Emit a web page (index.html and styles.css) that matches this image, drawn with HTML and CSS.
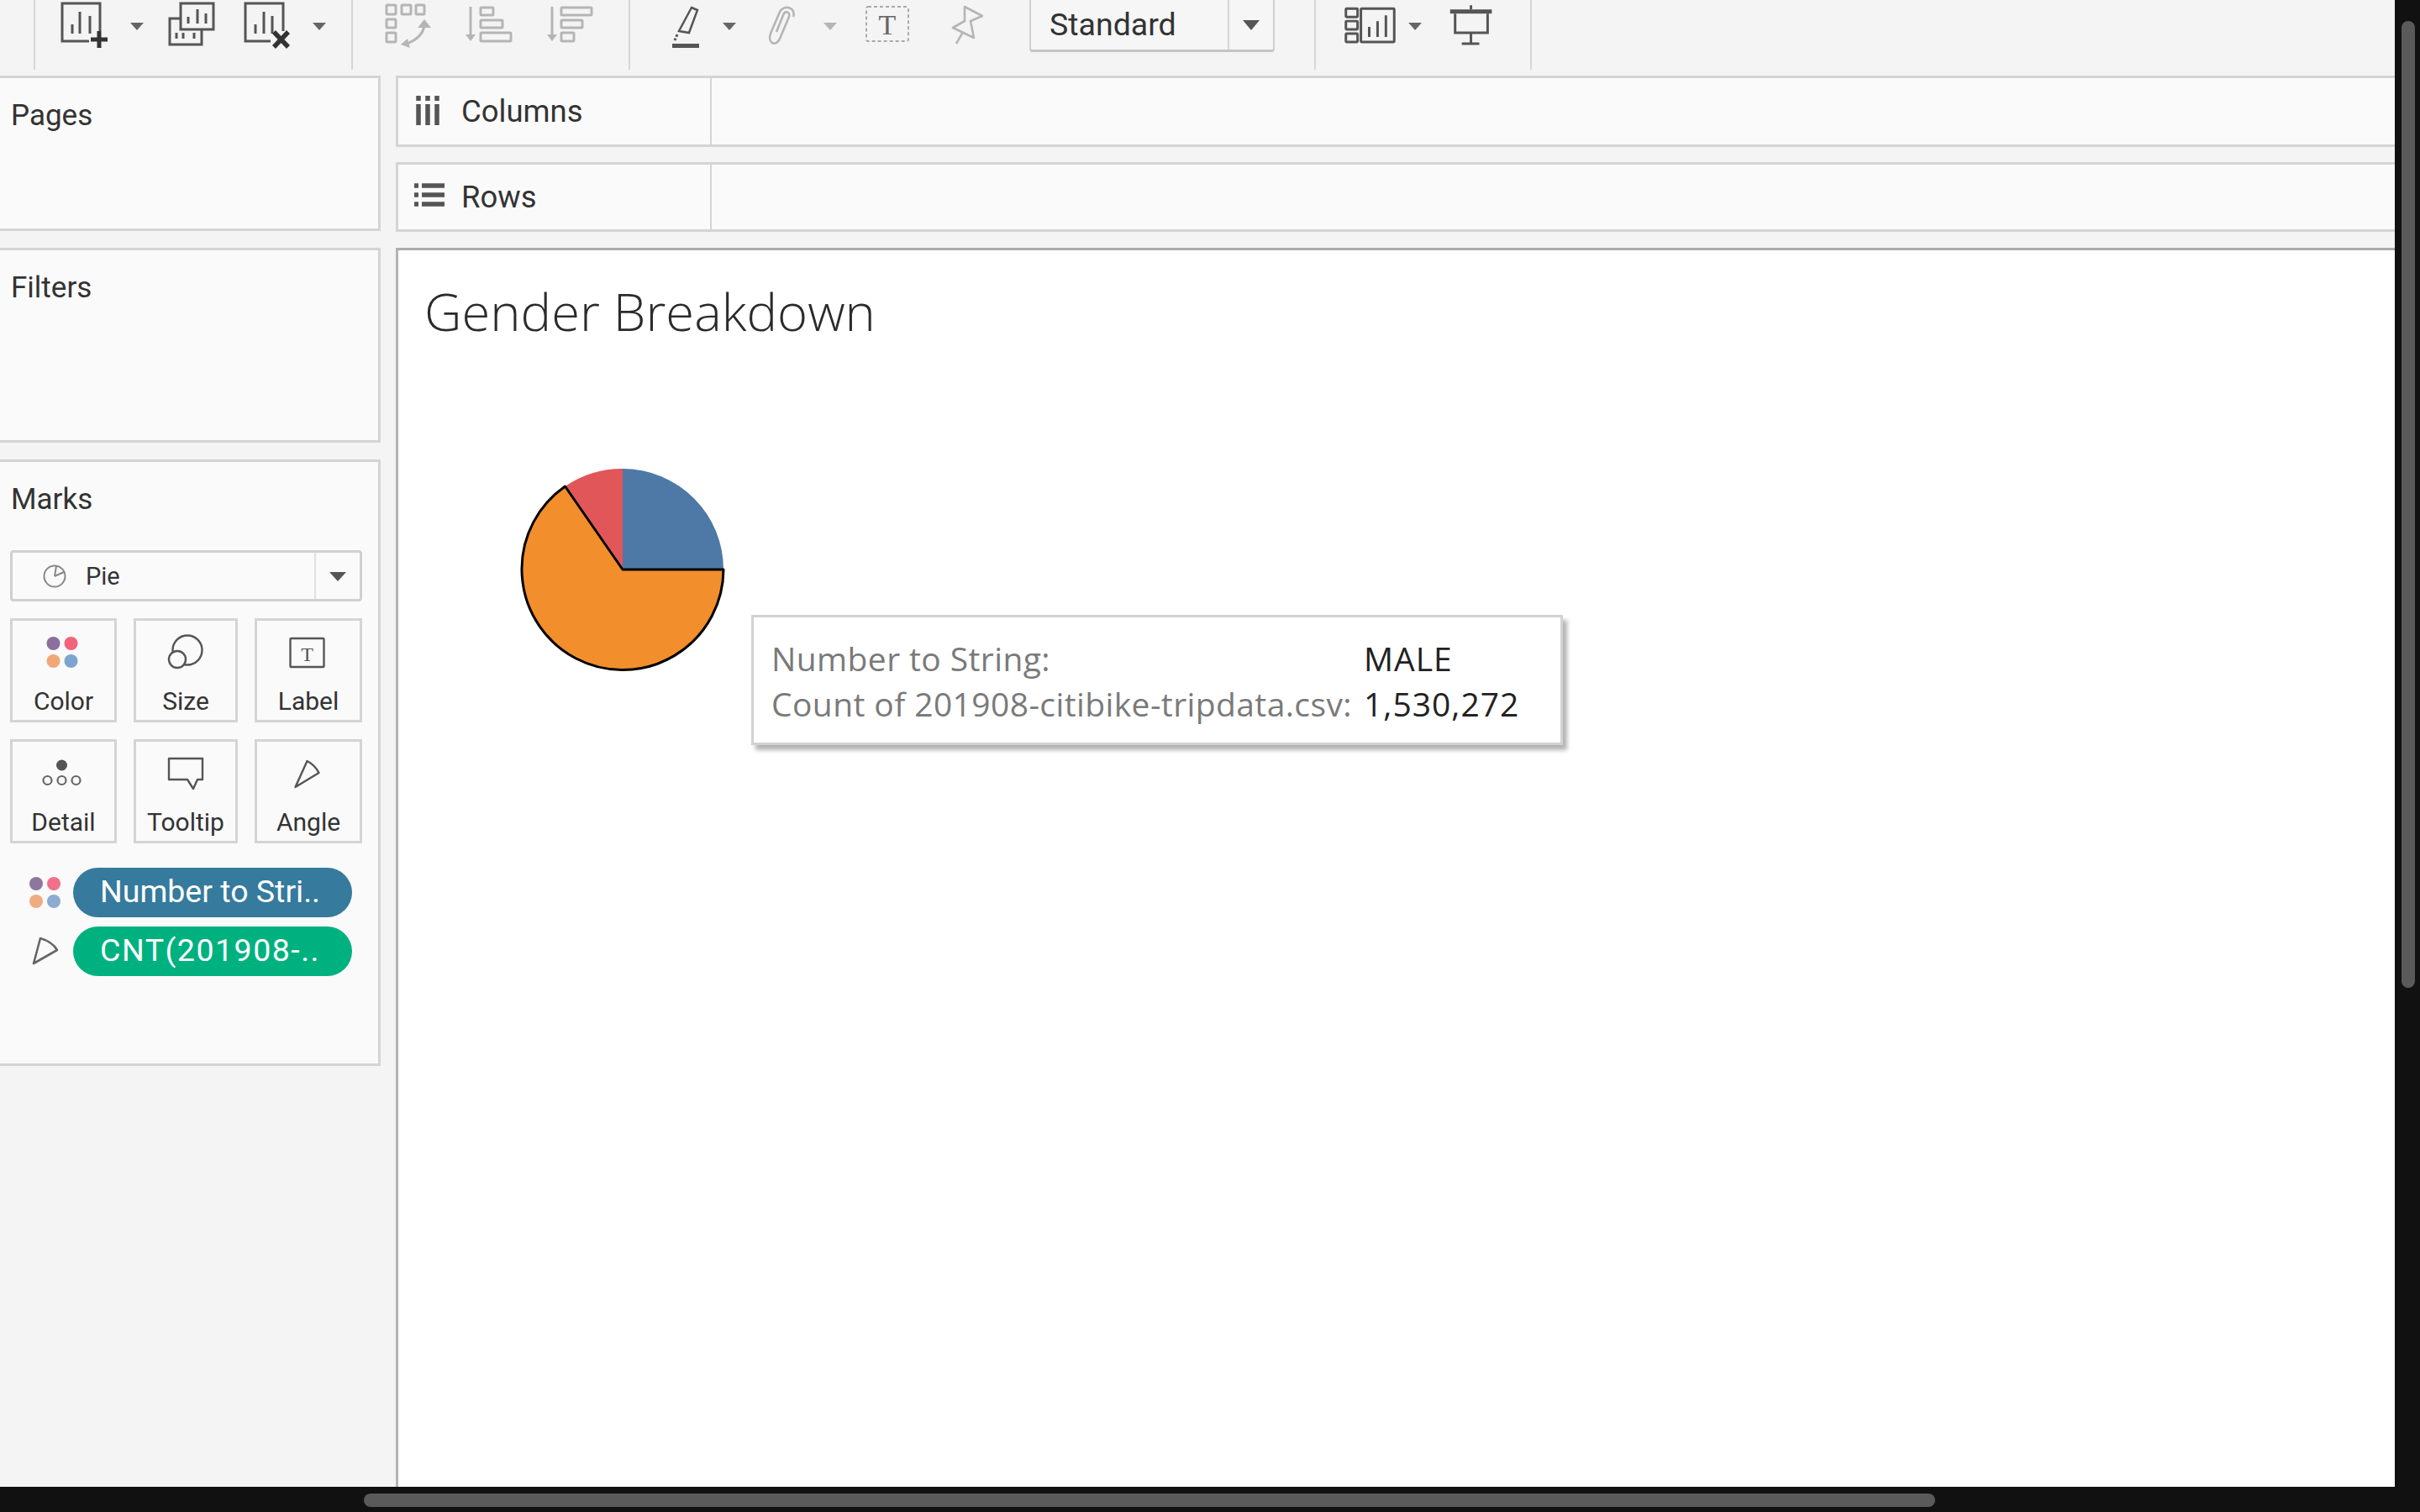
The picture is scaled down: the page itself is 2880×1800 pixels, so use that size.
FILE: index.html
```html
<!DOCTYPE html>
<html lang="en">
<head>
    <meta charset="UTF-8">
    <title>Gender Breakdown</title>
    <link rel="stylesheet" href="styles.css">
</head>
<body>

<div class="window">
    <div class="app">

        <div class="toolbar">
            <div class="tool-group group-a">
                <svg class="tools" width="376" height="83" viewBox="42 0 376 83">
                    <g fill="none" stroke="#555" stroke-width="3">
                        <path d="M119 37V4H74V49H106"/>
                        <path d="M86 29V40M95 14V40M107 19V40"/>
                        <rect x="215" y="4" width="39" height="31" fill="#f4f4f4"/>
                        <path d="M224 20V28M235 11V28M245 16V28"/>
                        <path d="M215 22H202V53H240V35"/>
                        <path d="M210 39V46M218 39V46M231 39V46"/>
                        <path d="M337 37V4H292V49H322"/>
                        <path d="M304 29V40M314 14V40M324 19V40"/>
                    </g>
                    <path d="M108 47H128M118 37V57" fill="none" stroke="#333" stroke-width="5"/>
                    <path d="M326 38L343 56M343 38L326 56" fill="none" stroke="#333" stroke-width="5.5"/>
                    <polygon points="155,27 171,27 163,36" fill="#666"/>
                    <polygon points="372,27 388,27 380,36" fill="#666"/>
                </svg>
            </div>
            <div class="tool-group group-b">
                <svg class="tools" width="328" height="83" viewBox="420 0 328 83">
                    <g fill="none" stroke="#b5b5b5" stroke-width="3">
                        <rect x="460" y="6" width="11" height="11" rx="1"/>
                        <rect x="478" y="6" width="11" height="11" rx="1"/>
                        <rect x="495" y="6" width="10" height="11" rx="1"/>
                        <rect x="460" y="23" width="11" height="10" rx="1"/>
                        <rect x="460" y="39" width="11" height="11" rx="1"/>
                        <path d="M505 30Q503 45 484 52"/>
                        <path d="M560 8V44M657 8V44"/>
                        <rect x="572" y="9" width="15" height="9" rx="1"/>
                        <rect x="572" y="24" width="26" height="9" rx="1"/>
                        <rect x="572" y="39" width="36" height="10" rx="1"/>
                        <rect x="668" y="9" width="36" height="9" rx="1"/>
                        <rect x="668" y="24" width="25" height="9" rx="1"/>
                        <rect x="668" y="39" width="15" height="10" rx="1"/>
                    </g>
                    <g fill="#b5b5b5">
                        <polygon points="497,33 513,33 505,23"/>
                        <polygon points="485,46 488,57 477,53"/>
                        <polygon points="554,41 566,41 560,49"/>
                        <polygon points="651,41 663,41 657,49"/>
                    </g>
                </svg>
            </div>
            <div class="tool-group group-c">
                <svg class="tools" width="475" height="83" viewBox="750 0 475 83">
                    <path d="M823 9L830 12L820 39L808 37Z" fill="none" stroke="#555" stroke-width="2.5"/>
                    <path d="M806 41L803 48" fill="none" stroke="#555" stroke-width="3" stroke-dasharray="3 2"/>
                    <rect x="800" y="52" width="32" height="5" fill="#555"/>
                    <polygon points="860,27 876,27 868,36" fill="#666"/>
                    <path d="M944 20C948 10 934 4 928 14L917 40C913 52 924 56 928 46L939 20C941 14 934 12 932 18L924 38" fill="none" stroke="#b5b5b5" stroke-width="2.6"/>
                    <polygon points="980,27 996,27 988,36" fill="#b5b5b5"/>
                    <rect x="1031" y="8" width="50" height="41" rx="2" fill="none" stroke="#aaa" stroke-width="2" stroke-dasharray="4 3"/>
                    <text class="serif-t" x="1056" y="41" font-size="34" fill="#666">T</text>
                    <path d="M1148 8L1169 19L1155 25L1159 45L1134 33L1148 25ZM1146 38L1138 52" fill="none" stroke="#b5b5b5" stroke-width="2.6" stroke-linejoin="round"/>
                </svg>
                <div class="select">
                    <span class="select-value">Standard</span>
                    <span class="select-arrow"></span>
                </div>
            </div>
            <div class="tool-group group-d">
                <svg class="tools" width="257" height="83" viewBox="1566 0 257 83">
                    <g fill="none" stroke="#555" stroke-width="3">
                        <rect x="1602" y="10" width="14" height="10" rx="1"/>
                        <rect x="1602" y="25" width="14" height="10" rx="1"/>
                        <rect x="1602" y="40" width="14" height="10" rx="1"/>
                        <rect x="1620" y="10" width="40" height="40" rx="1"/>
                        <path d="M1630 32V44M1640 25V44M1650 18V44"/>
                        <path d="M1733 16V39H1772V16M1752 39V52M1741 52H1762M1752 6V11"/>
                    </g>
                    <polygon points="1677,27 1693,27 1685,36" fill="#666"/>
                    <rect x="1727" y="11" width="50" height="5" fill="#555"/>
                </svg>
            </div>
        </div>

        <div class="workspace">
            <div class="sidebar">
                <section class="panel panel-pages"><h2>Pages</h2></section>
                <section class="panel panel-filters"><h2>Filters</h2></section>
                <section class="panel panel-marks">
                    <h2>Marks</h2>
                    <div class="mark-type">
                        <svg class="mark-type-icon" width="30" height="30" viewBox="0 0 30 30">
                            <circle cx="15" cy="15" r="12.5" fill="none" stroke="#888" stroke-width="2"/>
                            <path d="M15 15L17 3M15 15L26 10" fill="none" stroke="#888" stroke-width="2"/>
                        </svg>
                        <span class="mark-type-name">Pie</span>
                        <span class="mark-type-arrow"></span>
                    </div>
                    <div class="mark-cards">
                        <div class="mark-card">
                            <svg width="60" height="60" viewBox="0 0 60 60">
                                <circle cx="17.5" cy="20" r="8" fill="#8b6f9e"/>
                                <circle cx="38.5" cy="20" r="8" fill="#f1647a"/>
                                <circle cx="17.5" cy="41" r="8" fill="#f0a878"/>
                                <circle cx="38.5" cy="41" r="8" fill="#7ba5d0"/>
                            </svg>
                            <span>Color</span>
                        </div>
                        <div class="mark-card">
                            <svg width="60" height="60" viewBox="0 0 60 60">
                                <circle cx="32" cy="28" r="17.5" fill="none" stroke="#555" stroke-width="2.4"/>
                                <circle cx="20" cy="39" r="10" fill="#fafafa" stroke="#555" stroke-width="2.4"/>
                            </svg>
                            <span>Size</span>
                        </div>
                        <div class="mark-card">
                            <svg width="60" height="60" viewBox="0 0 60 60">
                                <rect x="8.5" y="14" width="40" height="34" rx="1" fill="none" stroke="#555" stroke-width="2.4"/>
                                <text class="serif-t" x="28.5" y="41" font-size="24" fill="#555">T</text>
                            </svg>
                            <span>Label</span>
                        </div>
                        <div class="mark-card">
                            <svg width="60" height="60" viewBox="0 0 60 60">
                                <circle cx="27.5" cy="21" r="6.5" fill="#555"/>
                                <g fill="none" stroke="#666" stroke-width="2.2">
                                    <circle cx="10.5" cy="39" r="5"/>
                                    <circle cx="27.5" cy="39" r="5"/>
                                    <circle cx="44.5" cy="39" r="5"/>
                                </g>
                            </svg>
                            <span>Detail</span>
                        </div>
                        <div class="mark-card">
                            <svg width="60" height="60" viewBox="0 0 60 60">
                                <path d="M10 13H50V38H44L39 49L32 38H10Z" fill="none" stroke="#555" stroke-width="2.4" stroke-linejoin="round"/>
                            </svg>
                            <span>Tooltip</span>
                        </div>
                        <div class="mark-card">
                            <svg width="60" height="60" viewBox="0 0 60 60">
                                <path d="M28.5 16Q38 21 42.5 30L14.5 47Z" fill="none" stroke="#555" stroke-width="2.4" stroke-linejoin="round"/>
                            </svg>
                            <span>Angle</span>
                        </div>
                    </div>
                    <div class="pills">
                        <div class="pill-row">
                            <svg class="pill-icon" width="75" height="59" viewBox="12 1032 75 59">
                                <circle cx="43" cy="1051" r="8" fill="#8b789c"/>
                                <circle cx="64" cy="1051" r="8" fill="#f1708a"/>
                                <circle cx="43" cy="1072" r="8" fill="#f0ab82"/>
                                <circle cx="64" cy="1072" r="8" fill="#8cabd0"/>
                            </svg>
                            <span class="pill pill-blue">Number to Stri..</span>
                        </div>
                        <div class="pill-row">
                            <svg class="pill-icon" width="75" height="59" viewBox="12 1102 75 59">
                                <path d="M48 1116Q62 1120 68 1130L40 1146Z" fill="none" stroke="#666" stroke-width="2.6" stroke-linejoin="round"/>
                            </svg>
                            <span class="pill pill-green">CNT(201908-..</span>
                        </div>
                    </div>
                </section>
            </div>

            <div class="content">
                <div class="shelf">
                    <div class="shelf-label">
                        <svg width="36" height="36" viewBox="0 0 36 36">
                            <path d="M5 0V6M5 10V35M16 0V6M16 10V35M27 0V6M27 10V35" fill="none" stroke="#555" stroke-width="5.5"/>
                        </svg>
                        <span>Columns</span>
                    </div>
                </div>
                <div class="shelf">
                    <div class="shelf-label">
                        <svg width="36" height="36" viewBox="0 0 36 36">
                            <path d="M0 5H5M9 5H36M0 16H5M9 16H36M0 27H5M9 27H36" fill="none" stroke="#555" stroke-width="5.5"/>
                        </svg>
                        <span>Rows</span>
                    </div>
                </div>
                <div class="canvas">
                    <h1>Gender Breakdown</h1>
                    <svg class="pie" width="262" height="262" viewBox="610 548 262 262">
                        <path d="M741 678V558A120 120 0 0 1 861 678Z" fill="#4e78a6"/>
                        <path d="M741 678L672.5 579A120 120 0 0 1 741 558Z" fill="#e15759"/>
                        <path d="M741 678H861A120 120 0 1 1 672.5 579Z" fill="#f28e2b" stroke="#000" stroke-width="3" stroke-linejoin="round"/>
                    </svg>
                    <div class="tip">
                        <span class="tip-key">Number to String:</span>
                        <span class="tip-val">MALE</span>
                        <span class="tip-key">Count of 201908-citibike-tripdata.csv:</span>
                        <span class="tip-val">1,530,272</span>
                    </div>
                </div>
            </div>
        </div>
    </div>

    <div class="track-v"><div class="thumb-v"></div></div>
    <div class="track-h"><div class="thumb-h"></div></div>
</div>

</body>
</html>
```

FILE: styles.css
```css
* {
    box-sizing: border-box;
}

html, body {
    margin: 0;
    height: 100%;
}

body {
    font-family: Roboto, "Liberation Sans", sans-serif;
    color: #333;
    background-color: #111;
    overflow: hidden;
}

svg {
    display: block;
}

.serif-t {
    font-family: "Liberation Serif", serif;
    text-anchor: middle;
}

.window {
    display: grid;
    grid-template-columns: 2850px 30px;
    grid-template-rows: 1770px 30px;
    height: 1800px;
}

.app {
    background-color: #f4f4f4;
    overflow: hidden;
}

/* toolbar */
.toolbar {
    display: flex;
    height: 90px;
    padding-left: 40px;
}

.tool-group {
    display: flex;
    align-items: flex-start;
    height: 83px;
    border-left: 2px solid #d6d6d6;
}

.group-a {
    width: 378px;
}

.group-b {
    width: 330px;
}

.group-c {
    width: 816px;
}

.group-d {
    width: 259px;
    border-right: 2px solid #d6d6d6;
}

.select {
    display: flex;
    width: 292px;
    height: 62px;
    background-color: #f6f6f6;
    border: 2px solid #cfcfcf;
    border-top: none;
    border-bottom: 3px solid #c4c4c4;
    border-radius: 0 0 4px 4px;
}

.select-value {
    width: 236px;
    padding-left: 22px;
    font-size: 37.5px;
    line-height: 58px;
    border-right: 2px solid #d6d6d6;
}

.select-arrow {
    width: 0;
    height: 0;
    margin: 24px 0 0 16px;
    border-left: 10px solid transparent;
    border-right: 10px solid transparent;
    border-top: 12px solid #555;
}

/* left side */
.workspace {
    display: flex;
    gap: 18px;
}

.sidebar {
    display: flex;
    flex-direction: column;
    gap: 20px;
    width: 453px;
}

.panel {
    background-color: #fafafa;
    border: 3px solid #d4d4d4;
    border-left: none;
    padding: 24px 19px 0 12px;
}

.panel h2 {
    margin: 0 0 0 1px;
    font-size: 35px;
    font-weight: 400;
    line-height: 42px;
}

.panel-pages {
    height: 185px;
}

.panel-filters {
    height: 232px;
}

.panel-marks {
    height: 722px;
}

.mark-type {
    display: flex;
    align-items: center;
    height: 61px;
    margin-top: 39px;
    border: 3px solid #d0d0d0;
    border-radius: 4px;
}

.mark-type-icon {
    margin-left: 35px;
}

.mark-type-name {
    margin-left: 22px;
    font-size: 29px;
}

.mark-type-arrow {
    position: relative;
    align-self: stretch;
    width: 54px;
    margin-left: auto;
    border-left: 2px solid #e0e0e0;
}

.mark-type-arrow::after {
    content: "";
    position: absolute;
    left: 16px;
    top: 23px;
    border-left: 10px solid transparent;
    border-right: 10px solid transparent;
    border-top: 11px solid #555;
}

.mark-cards {
    display: grid;
    grid-template-columns: 127px 124px 128px;
    grid-auto-rows: 124px;
    gap: 20px;
    margin-top: 20px;
}

.mark-card {
    display: flex;
    flex-direction: column;
    align-items: center;
    padding-top: 7px;
    font-size: 30px;
    line-height: 40px;
    border: 3px solid #d4d4d4;
}

.mark-card span {
    margin-top: 9px;
}

.pills {
    display: flex;
    flex-direction: column;
    gap: 11px;
    margin-top: 29px;
}

.pill-row {
    display: flex;
}

.pill {
    width: 332px;
    height: 59px;
    padding-left: 32px;
    font-size: 37.5px;
    line-height: 56px;
    color: #fff;
    border-radius: 30px;
}

.pill-blue {
    background-color: #367a9d;
}

.pill-green {
    background-color: #00b180;
    letter-spacing: 1.5px;
}

/* shelves and view */
.content {
    display: flex;
    flex-direction: column;
    flex: 1;
}

.shelf {
    height: 85px;
    margin-bottom: 18px;
    background-color: #fafafa;
    border: 3px solid #d4d4d4;
    border-right: none;
}

.shelf + .shelf {
    height: 83px;
    margin-bottom: 19px;
}

.shelf-label {
    display: flex;
    align-items: center;
    width: 373px;
    height: 100%;
    padding-left: 19px;
    font-size: 36.5px;
    border-right: 2px solid #d4d4d4;
}

.shelf-label svg {
    margin-top: -2px;
}

.shelf-label span {
    margin-left: 20px;
}

.canvas {
    position: relative;
    height: 1476px;
    padding: 32px 0 0 31px;
    background-color: #fff;
    border-top: 3px solid #ababab;
    border-left: 3px solid #b3b3b3;
}

.canvas h1 {
    margin: 0;
    font-family: "Open Sans", sans-serif;
    font-size: 61.5px;
    font-weight: 300;
    line-height: 80px;
    color: #2b2b2b;
}

.pie {
    margin: 138px 0 0 105px;
}

.tip {
    position: absolute;
    left: 420px;
    top: 434px;
    display: grid;
    grid-template-columns: 705px auto;
    grid-auto-rows: 54px;
    align-content: center;
    width: 966px;
    height: 155px;
    padding: 2px 0 0 21px;
    font-family: "Open Sans", sans-serif;
    font-size: 39px;
    letter-spacing: 0.4px;
    line-height: 54px;
    background-color: #fff;
    border: 3px solid #d2d2d2;
    box-shadow: 5px 6px 5px #b4b4b4;
}

.tip-key {
    color: #7a7a7a;
}

.tip-val {
    color: #222;
    letter-spacing: 1px;
}

/* scrollbars */
.track-v {
    padding: 25px 0 0 8px;
}

.thumb-v {
    width: 16px;
    height: 1151px;
    background-color: #5a5a5a;
    border-radius: 8px;
}

.track-h {
    grid-column: 1 / 3;
    padding: 8px 0 0 433px;
}

.thumb-h {
    width: 1870px;
    height: 16px;
    background-color: #5a5a5a;
    border-radius: 8px;
}
```
